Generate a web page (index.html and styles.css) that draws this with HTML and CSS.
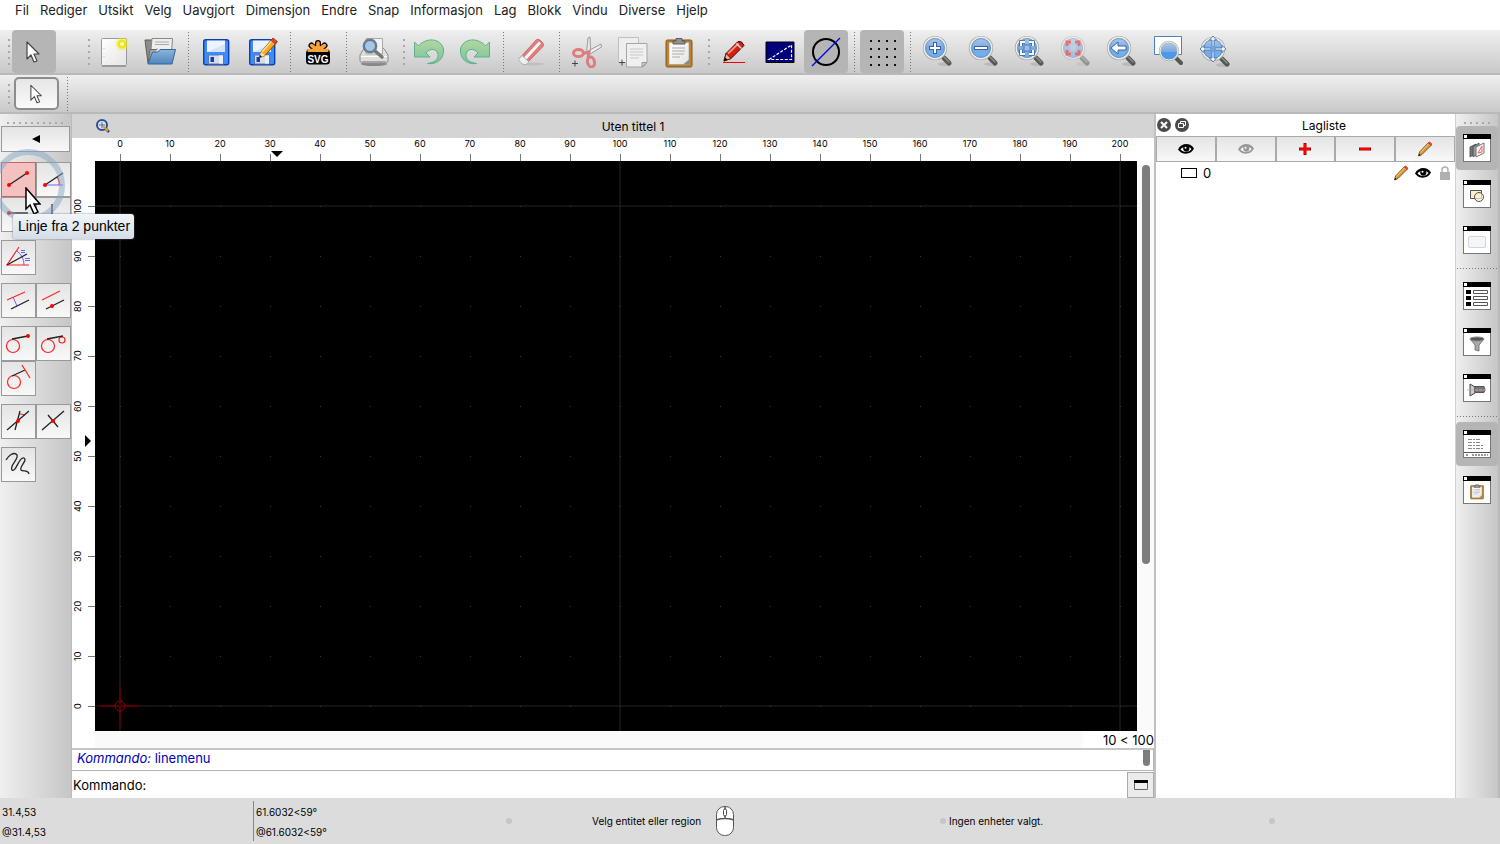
FILE: index.html
```html
<!DOCTYPE html>
<html lang="nb">
<head>
  <meta charset="UTF-8">
  <title>Uten tittel 1</title>
  <meta name="viewport" content="width=device-width, initial-scale=1.0">
  <link rel="stylesheet" href="styles.css">
</head>
<body>

  <!-- shared icon parts -->
  <svg class="defs" aria-hidden="true">
    <defs>
      <linearGradient id="glass" x1="0" y1="0" x2="0" y2="1">
        <stop offset="0" stop-color="#b4cbea"/><stop offset="0.5" stop-color="#7ba9e0"/><stop offset="1" stop-color="#6fb0f2"/>
      </linearGradient>
      <linearGradient id="green" x1="0" y1="0" x2="0" y2="1">
        <stop offset="0" stop-color="#b2d8a0"/><stop offset="1" stop-color="#78c29c"/>
      </linearGradient>
      <linearGradient id="paper" x1="0" y1="0" x2="1" y2="1">
        <stop offset="0" stop-color="#ffffff"/><stop offset="1" stop-color="#e4e4e2"/>
      </linearGradient>
      <linearGradient id="folder" x1="0" y1="0" x2="0" y2="1">
        <stop offset="0" stop-color="#8db4dc"/><stop offset="1" stop-color="#4f86bd"/>
      </linearGradient>
    </defs>
    <symbol id="i-pointer" viewBox="0 0 32 32">
      <path d="M9 6v17l4-4 3 7 3-1-3-7h5z" fill="#fff" stroke="#444" stroke-width="1.2" stroke-linejoin="round"/>
    </symbol>
    <symbol id="i-lens" viewBox="0 0 32 32">
      <ellipse cx="23" cy="28" rx="7" ry="2" fill="#000" opacity=".1"/>
      <path d="M20 20l2 2" stroke="#aaa" stroke-width="3"/>
      <path d="M22 22l5 5" stroke="#555753" stroke-width="5" stroke-linecap="round"/>
      <path d="M22 21l5 5" stroke="#8b8d88" stroke-width="1.5" stroke-linecap="round"/>
      <circle cx="13" cy="12" r="11" fill="url(#glass)" stroke="#a8aaa3" stroke-width="2.4"/>
      <circle cx="13" cy="12" r="10.7" fill="none" stroke="#eeeeec" stroke-width="1.4"/>
      <circle cx="13" cy="12" r="9.4" fill="none" stroke="#5c8cc8" stroke-width=".8"/>
    </symbol>
    <symbol id="i-floppy" viewBox="0 0 32 32">
      <rect x="3.7" y="3.7" width="25" height="25" rx="2" fill="#3d8bfa" stroke="#103fa8" stroke-width="1.4"/>
      <path d="M7 4.500h18v11.500h-18z" fill="#edf4ff"/>
      <path d="M7 16l18-8v8z" fill="#d2e3fa"/>
      <rect x="8.500" y="19" width="15" height="9" fill="#d8dce4" stroke="#5379b8"/>
      <rect x="10.500" y="21" width="3.500" height="5" fill="#0b3eb8"/>
      <path d="M20 19v9M22 19v9" stroke="#fff"/>
    </symbol>
    <symbol id="i-pencil" viewBox="0 0 16 16">
      <path d="M1.500 15l1-4L11.500 1.500l3 2.500L5 13.500z" fill="#d99838" stroke="#70451c" stroke-width=".8"/>
      <path d="M3.500 11.500l8.500-9" stroke="#f5ce8a"/>
      <path d="M11 2l1.500-1.500 2.800 2.600L14 4.700z" fill="#e33a22"/>
      <path d="M1.500 15l.6-2.200 1.500 1.500z" fill="#111"/>
    </symbol>
    <symbol id="i-eye" viewBox="0 0 16 12">
      <path d="M0 6.500C3 0 12-1 16 5.500 13 12 4 12.500 0 6.500z" fill="currentColor"/>
      <path d="M2.500 6.500C5 3 11 3 13.500 6 11 9.500 5.500 10 2.500 6.500z" fill="#fff"/>
      <circle cx="8.300" cy="5.600" r="3.100" fill="currentColor"/>
      <circle cx="7.500" cy="4.700" r="1" fill="#fff"/>
    </symbol>
    <symbol id="i-window" viewBox="0 0 28 28">
      <rect x=".5" y=".5" width="27" height="27" fill="#fff" stroke="#777"/>
      <path d="M0 0h28v5h-28z" fill="#000"/>
      <path d="M1 1h3v3h-3z" fill="#fff"/>
    </symbol>
    <symbol id="i-clipboard" viewBox="0 0 32 32">
      <rect x="3" y="4" width="26" height="27" rx="1.500" fill="#bc812b" stroke="#83571a"/>
      <path d="M6 6.500h20v22h-20z" fill="url(#paper)" stroke="#999" stroke-width=".6"/>
      <path d="M26 23.500v5h-6z" fill="#8a8a86"/>
      <path d="M9 12h13M9 15h13M9 18h12M9 21h8" stroke="#aaa"/>
      <path d="M10 8v-3h3v-2.500h6v2.500h3v3z" fill="#92948f" stroke="#50524e" stroke-width=".9"/>
    </symbol>
  </svg>

  <nav class="menubar">
    <a href="#">Fil</a>
    <a href="#">Rediger</a>
    <a href="#">Utsikt</a>
    <a href="#">Velg</a>
    <a href="#">Uavgjort</a>
    <a href="#">Dimensjon</a>
    <a href="#">Endre</a>
    <a href="#">Snap</a>
    <a href="#">Informasjon</a>
    <a href="#">Lag</a>
    <a href="#">Blokk</a>
    <a href="#">Vindu</a>
    <a href="#">Diverse</a>
    <a href="#">Hjelp</a>
  </nav>

  <div class="toolbar">
    <span class="handle"></span>
    <button class="tool pressed" aria-label="Velg"><svg viewBox="0 0 32 32"><use href="#i-pointer"/></svg></button>
    <span class="handle spaced"></span>
    <button class="tool" aria-label="Ny">
      <svg viewBox="0 0 32 32">
        <rect x="3.500" y="2.500" width="25" height="27" rx="1" fill="url(#paper)" stroke="#999"/>
        <path d="M4 30.500h24" stroke="#777" opacity=".6"/>
        <path d="M6 12v1M6 20v1" stroke="#bbb"/>
        <circle cx="24" cy="8" r="6.500" fill="#f4ef31" opacity=".45"/>
        <circle cx="24" cy="8" r="4.500" fill="#efe51c"/>
        <circle cx="24" cy="8" r="2" fill="#fffcc0"/>
      </svg>
    </button>
    <button class="tool" aria-label="Åpne">
      <svg viewBox="0 0 32 32">
        <path d="M1 4h8l2 3v20h-7z" fill="#8b8d89" stroke="#5b5d59"/>
        <path d="M8 2.500h20.500l-1.500 22h-21z" fill="#eee" stroke="#888"/>
        <path d="M11 6h14M11 8.500h14" stroke="#aaa"/>
        <path d="M4 27.500l2-14h6l1.500-.5" stroke="#666" fill="#aaa"/>
        <path d="M4 28l4.500-12H14l2-2.500h15.500L28 28z" fill="url(#folder)" stroke="#34659b"/>
      </svg>
    </button>
    <span class="sep"></span>
    <button class="tool" aria-label="Lagre"><svg viewBox="0 0 32 32"><use href="#i-floppy"/></svg></button>
    <button class="tool" aria-label="Lagre som">
      <svg viewBox="0 0 32 32">
        <use href="#i-floppy"/>
        <path d="M13 22l2-6L26.500 2.500l4.500 3.500L19 19.500z" fill="#f8a91f" stroke="#8f4a05"/>
        <path d="M16 16L27 3.500" stroke="#ffe08a" stroke-width="1.500"/>
        <path d="M25 4.500l2-2.500 4.500 3.500-2 2.500z" fill="#dc4a35" stroke="#8d2a18" stroke-width=".7"/>
        <path d="M13 22l2-6 4 3.500z" fill="#f6dfb6"/>
        <path d="M13 22l1-3 2 1.500z" fill="#111"/>
      </svg>
    </button>
    <span class="sep"></span>
    <button class="tool" aria-label="Eksporter SVG">
      <svg viewBox="0 0 32 32">
        <g stroke="#000" stroke-width="6" stroke-linecap="round"><path d="M16 16V7M16 16L9.500 9.500M16 16l6.500-6.500M16 16H7.500M16 16h8.500"/></g>
        <rect x="4" y="14" width="24" height="14.500" rx="3.500" fill="#000"/>
        <g stroke="#f7a23a" stroke-width="3.500" stroke-linecap="round"><path d="M16 14V7M16 14l-6.500-4.500M16 14l6.500-4.500M16 14.500H7M16 14.500h9"/></g>
        <rect x="5" y="16" width="22" height="12" rx="2.500" fill="#000"/>
        <text x="16" y="27" class="svg-label">SVG</text>
      </svg>
    </button>
    <span class="sep"></span>
    <button class="tool" aria-label="Forhåndsvisning">
      <svg viewBox="0 0 32 32">
        <ellipse cx="16" cy="28" rx="13" ry="2" fill="#888"/>
        <path d="M5 14l3-3h16l3 3 3 5v6l-2 2.500H4L2 25v-6z" fill="#dededc" stroke="#8b8d88"/>
        <path d="M8 2.500h16.500V18H8z" fill="#f2f2f0" stroke="#aaa"/>
        <path d="M3 20.500h26" stroke="#fff"/>
        <path d="M4 26h24" stroke="#a5a5a3" stroke-width="2"/>
        <path d="M17 15l7 6" stroke="#777975" stroke-width="3.500" stroke-linecap="round"/>
        <circle cx="12" cy="10" r="6.500" fill="#a9c5e6" stroke="#7a7c78" stroke-width="1.800"/>
        <circle cx="12" cy="10" r="5.500" fill="none" stroke="#3f78bc"/>
      </svg>
    </button>
    <span class="handle"></span>
    <button class="tool" aria-label="Angre">
      <svg viewBox="0 0 32 32">
        <path id="bend" d="M1.500 6l4 4C13 1 28 2 30.500 13c1 9-6 16-16 14.500 7-1 11-4 10.500-9-1-6-8-7-12-1.500l4 4H1.500z" fill="url(#green)" stroke="#5eb08b" stroke-linejoin="round"/>
      </svg>
    </button>
    <button class="tool" aria-label="Gjør om">
      <svg viewBox="0 0 32 32"><use href="#bend" transform="matrix(-1 0 0 1 32 0)"/></svg>
    </button>
    <span class="sep"></span>
    <button class="tool faded" aria-label="Slett">
      <svg viewBox="0 0 32 32">
        <ellipse cx="18" cy="28" rx="11" ry="1.500" fill="#bbb"/>
        <path d="M4 23L21 4q2-1.500 4 0l3 3q1 2 0 3.500L11 28z" fill="#e86464" stroke="#b04444" stroke-width=".8"/>
        <path d="M8.500 22L24 5.500l2 2L10.500 24.500z" fill="#fff"/>
        <path d="M3.500 23.500L7 19.500l7 6.500-3 2.500q-4 1-7.500-5z" fill="#f7f7f7" stroke="#aaa"/>
      </svg>
    </button>
    <span class="sep"></span>
    <button class="tool" aria-label="Klipp ut">
      <svg viewBox="0 0 32 32">
        <path d="M15.500 17L17 2l2-1 .5 15z" fill="#eee" stroke="#999"/>
        <path d="M17 15l13-7 .5 3L19 18z" fill="#eee" stroke="#999"/>
        <g fill="none" stroke="#dd7d7d" stroke-width="3"><ellipse cx="7.500" cy="17" rx="5" ry="3.500"/><ellipse cx="20" cy="26" rx="3.500" ry="5" transform="rotate(-12 20 26)"/><path d="M12 17.500l6-1.500-1 6"/></g>
        <path d="M1 27.500h6M4 24.500v6" stroke="#444"/>
      </svg>
    </button>
    <button class="tool" aria-label="Kopier">
      <svg viewBox="0 0 32 32">
        <path d="M1.500 1.500h20v25h-20z" fill="#eee" stroke="#c0c0c0"/>
        <path d="M9.500 7.500h20.500v19l-4 4.500H9.500z" fill="#f0f0f0" stroke="#a5a5a5"/>
        <path d="M30 26.500h-5V31z" fill="#ccc" stroke="#999"/>
        <path d="M13 13h13M13 16h13M13 19h13M13 22h9" stroke="#c8c8c8"/>
        <path d="M2 26.500h6M5 23.500v6" stroke="#444"/>
      </svg>
    </button>
    <button class="tool" aria-label="Lim inn"><svg viewBox="0 0 32 32"><use href="#i-clipboard"/></svg></button>
    <span class="handle"></span>
    <button class="tool" aria-label="Penn">
      <svg viewBox="0 0 32 32">
        <path d="M6 25l2-7.500L20 5.500q4-1 6 4L13 22.500z" fill="#d71e13" stroke="#400"/>
        <path d="M10 17.500L20.500 7.500" stroke="#ff8b7d" stroke-width="2"/>
        <path d="M18.500 7.500l5 5" stroke="#ddd" stroke-width="1.500"/>
        <path d="M6 25l2-7.500 5 5z" fill="#e3b887" stroke="#400" stroke-width=".7"/>
        <path d="M6 25l1-3.500 2.500 2.300z"/>
        <path d="M5 26.500h22" stroke="#f00"/>
      </svg>
    </button>
    <button class="tool" aria-label="Utkast">
      <svg viewBox="0 0 32 32">
        <path d="M2 6h28v20.500H2z" fill="#00007d" stroke="#000"/>
        <path d="M5 23.500L27.500 9v14.500z" fill="none" stroke="#fff" stroke-width="1.200" stroke-dasharray="3 1.500"/>
      </svg>
    </button>
    <button class="tool pressed" aria-label="Utkastmodus">
      <svg viewBox="0 0 32 32">
        <circle cx="16" cy="16" r="13" fill="none" stroke="#000" stroke-width="2"/>
        <path d="M2 30L30 2" stroke="#00d" stroke-width="1.200"/>
      </svg>
    </button>
    <span class="sep"></span>
    <button class="tool pressed" aria-label="Rutenett">
      <svg viewBox="0 0 32 32"><path d="M4 5h26M4 13h26M4 21h26M4 29h26" stroke="#111" stroke-width="2" stroke-dasharray="2 6"/></svg>
    </button>
    <span class="sep"></span>
    <button class="tool" aria-label="Zoom inn">
      <svg viewBox="0 0 32 32"><use href="#i-lens"/><path d="M13 6v12M7 12h12" stroke="#3465a4" stroke-width="4"/><path d="M13 7v10M8 12h10" stroke="#fff" stroke-width="2"/></svg>
    </button>
    <button class="tool" aria-label="Zoom ut">
      <svg viewBox="0 0 32 32"><use href="#i-lens"/><path d="M6 12h14" stroke="#3465a4" stroke-width="4"/><path d="M7 12h12" stroke="#fff" stroke-width="2"/></svg>
    </button>
    <button class="tool" aria-label="Autozoom">
      <svg viewBox="0 0 32 32">
        <use href="#i-lens"/>
        <path d="M7 10V6h4M15 6h4v4M19 14v4h-4M11 18H7v-4" fill="none" stroke="#3465a4" stroke-width="3.600"/>
        <path d="M7 10V6h4M15 6h4v4M19 14v4h-4M11 18H7v-4" fill="none" stroke="#fff" stroke-width="2"/>
        <rect x="10" y="9" width="6" height="6" fill="#9dbde5" stroke="#4b7fc0"/>
      </svg>
    </button>
    <button class="tool disabled" aria-label="Zoom til utvalg">
      <svg viewBox="0 0 32 32">
        <use href="#i-lens"/>
        <path d="M7 10V6h4M15 6h4v4M19 14v4h-4M11 18H7v-4" fill="none" stroke="#f00000" stroke-width="3"/>
        <rect x="10" y="9" width="6" height="6" fill="#9dbde5"/>
      </svg>
    </button>
    <button class="tool" aria-label="Forrige visning">
      <svg viewBox="0 0 32 32"><use href="#i-lens"/><path d="M5 12l7-6v4h8v4h-8v4z" fill="#fff" stroke="#3465a4" stroke-linejoin="round"/></svg>
    </button>
    <button class="tool" aria-label="Zoom vindu">
      <svg viewBox="0 0 32 32">
        <path d="M2.500.5h27v18h-27z" fill="#fff" stroke="#4c80c4"/>
        <path d="M24 22l5 5" stroke="#555753" stroke-width="4" stroke-linecap="round"/>
        <circle cx="17" cy="15" r="9" fill="url(#glass)" stroke="#b5b7b0" stroke-width="2.500"/>
        <path d="M9 16h16a8 8 0 0 1-16 0z" fill="#4e98e8"/>
        <circle cx="17" cy="15" r="9" fill="none" stroke="#eee"/>
      </svg>
    </button>
    <button class="tool" aria-label="Panorer">
      <svg viewBox="0 0 32 32">
        <use href="#i-lens" x="2" y="1" width="32" height="32"/>
        <g fill="#fff" stroke="#3f73b6" stroke-width=".9" stroke-linejoin="round">
          <path d="M15 0l3.500 4H16v7h-2V4h-2.500z"/><path d="M15 26l3.500-4H16v-7h-2v7h-2.500z"/>
          <path d="M2 13l4-3.500V12h7v2H6v2.500z"/><path d="M28 13l-4-3.500V12h-7v2h7v2.500z"/>
        </g>
        <circle cx="15" cy="13" r="2" fill="#6fa4df"/>
      </svg>
    </button>
  </div>

  <div class="toolbar options">
    <span class="handle"></span>
    <button class="option" aria-label="Pekerverktøy"><svg viewBox="0 0 32 32"><use href="#i-pointer"/></svg></button>
    <span class="sep"></span>
  </div>

  <main class="workspace">

    <aside class="tools">
      <span class="grip"></span>
      <button class="back" aria-label="Tilbake"><svg viewBox="0 0 8 8"><path d="M0 4l8-4v8z"/></svg></button>

      <div class="tool-group first">
        <button class="cell active" aria-label="Linje fra 2 punkter"><svg viewBox="0 0 35 35"><path class="k" d="M8 23l18-12"/><circle class="dot" cx="8" cy="23" r="2"/><circle class="dot" cx="26" cy="11" r="2"/></svg></button>
        <button class="cell" aria-label="Linje med vinkel"><svg viewBox="0 0 35 35"><path class="b" d="M9 23h18"/><path class="r" d="M21 15q3 4 2 8"/><path class="k" d="M9 23l18-12"/><circle class="dot" cx="9" cy="23" r="2"/></svg></button>
        <button class="cell" aria-label="Horisontal linje"><svg viewBox="0 0 35 35"><path class="k" d="M8 16h19"/><circle class="dot" cx="8" cy="16" r="2"/></svg></button>
        <button class="cell" aria-label="Vertikal linje"><svg viewBox="0 0 35 35"><path class="k" d="M16 7v19"/><circle class="dot" cx="16" cy="26" r="2"/></svg></button>
      </div>
      <div class="tool-group">
        <button class="cell" aria-label="Halveringslinje"><svg viewBox="0 0 35 35"><path class="b" d="M16 11q7 5 7 14M20 10.500h4M20 12.500h4M24 18.500h5M24 20.500h5"/><path class="r" d="M18 7L6 25h22"/><path class="k" d="M6 25l20-11"/></svg></button>
      </div>
      <div class="tool-group">
        <button class="cell" aria-label="Parallell med avstand"><svg viewBox="0 0 35 35"><path class="r" d="M6 17l18-8"/><path class="b" d="M12 14l4 9"/><path class="k" d="M10 26l18-9"/></svg></button>
        <button class="cell" aria-label="Parallell gjennom punkt"><svg viewBox="0 0 35 35"><path class="r" d="M6 17l18-9"/><path class="k" d="M10 26l18-9"/><circle class="dot" cx="16" cy="23" r="2"/></svg></button>
      </div>
      <div class="tool-group">
        <button class="cell" aria-label="Tangent fra punkt"><svg viewBox="0 0 35 35"><circle class="r" cx="12" cy="20" r="6.500"/><path class="k" d="M11 13l16-3"/><circle class="dot" cx="27" cy="10" r="2"/></svg></button>
        <button class="cell" aria-label="Tangent fra 2 sirkler"><svg viewBox="0 0 35 35"><circle class="r" cx="12" cy="20" r="6.500"/><circle class="r" cx="26" cy="14" r="3"/><path class="k" d="M11 13l16-3"/></svg></button>
        <button class="cell" aria-label="Ortogonal tangent"><svg viewBox="0 0 35 35"><circle class="r" cx="13" cy="21" r="6.500"/><path class="k" d="M11 15l13-6"/><path class="r" d="M21 4l8 13"/></svg></button>
      </div>
      <div class="tool-group">
        <button class="cell" aria-label="Relativ vinkel"><svg viewBox="0 0 35 35"><path class="r" d="M19 10l5 1"/><path class="k" d="M6 26L28 7M14 26l5-19"/><circle class="dot" cx="17" cy="17" r="2"/></svg></button>
        <button class="cell" aria-label="Ortogonal linje"><svg viewBox="0 0 35 35"><path class="k" d="M6 26L28 7M12 11l10 12"/><circle class="dot" cx="17" cy="17" r="2"/></svg></button>
      </div>
      <div class="tool-group">
        <button class="cell" aria-label="Frihåndslinje"><svg viewBox="0 0 35 35"><path class="k" d="M5 13c2-4 8-9 11-5 2 4-8 11-5 15 4 3 7-14 12-12 4 2-5 9-3 12 2 2 7-1 8 4"/></svg></button>
      </div>

      <div class="click-ring"></div>
      <svg class="mouse-arrow" viewBox="0 0 16 28"><path d="M1 1v21l4-4 4 9 4-2-4-8h6z" fill="#fff" stroke="#000" stroke-width="1.500"/></svg>
      <div class="tooltip" role="tooltip">Linje fra 2 punkter</div>
    </aside>

    <section class="document">
      <header class="doc-title">
        <svg class="doc-icon" viewBox="0 0 14 14"><circle cx="6" cy="6" r="5" fill="#dce6f5" stroke="#2c4d91" stroke-width="2"/><path d="M3 6h6M6 3v6" stroke="#456cac"/><path d="M9 9l4 4" stroke="#24427c" stroke-width="2.500"/><path d="M7 7l5 5" stroke="#e3a021" stroke-width="2"/></svg>
        <h1>Uten tittel 1</h1>
      </header>

      <div class="view">
        <div class="ruler-top">
          <span>0</span><span>10</span><span>20</span><span>30</span><span>40</span><span>50</span><span>60</span><span>70</span><span>80</span><span>90</span><span>100</span><span>110</span><span>120</span><span>130</span><span>140</span><span>150</span><span>160</span><span>170</span><span>180</span><span>190</span><span>200</span>
          <i class="marker-x"></i>
        </div>
        <div class="ruler-left">
          <span>0</span><span>10</span><span>20</span><span>30</span><span>40</span><span>50</span><span>60</span><span>70</span><span>80</span><span>90</span><span>100</span>
          <i class="marker-y"></i>
        </div>
        <svg class="drawing" viewBox="0 0 1042 570" preserveAspectRatio="xMinYMax slice" aria-label="Tegning">
          <defs>
            <pattern id="dots" x="0" y="20" width="50" height="50" patternUnits="userSpaceOnUse">
              <rect x="25" y="25" width="1" height="1" fill="#3a3a3a"/>
            </pattern>
          </defs>
          <rect width="1042" height="570" fill="#000"/>
          <path d="M25 0v570M525 0v570M1025 0v570M0 45h1042M0 545h1042" stroke="#121212" stroke-width="2"/>
          <rect width="1042" height="570" fill="url(#dots)"/>
          <path d="M25 525v40M5 545h40" stroke="#500000" stroke-width="2"/>
          <circle cx="25" cy="545" r="5" fill="none" stroke="#900000"/>
        </svg>
        <div class="scroll-y"><span></span></div>
      </div>
      <div class="view-foot">
        <span class="scroll-x"></span>
        <span class="grid-status">10 &lt; 100</span>
      </div>

      <div class="log">
        <p><em>Kommando:</em> linemenu</p>
        <span class="log-thumb"></span>
      </div>
      <form class="command">
        <label for="command">Kommando:</label>
        <input id="command" type="text">
        <button type="button" aria-label="Flytt kommandovindu"><svg viewBox="0 0 14 10"><path d="M.5.5h13v9H.5z" fill="#eee" stroke="#666"/><path d="M0 0h14v3H0z"/></svg></button>
      </form>
    </section>

    <section class="layers">
      <header class="layers-title">
        <button aria-label="Lukk"><svg viewBox="0 0 14 14"><circle cx="7" cy="7" r="7" fill="#4b4b4b"/><path d="M4 4l6 6M10 4l-6 6" stroke="#fff" stroke-width="2"/></svg></button>
        <button aria-label="Løsne"><svg viewBox="0 0 14 14"><circle cx="7" cy="7" r="7" fill="#4b4b4b"/><path d="M5.500 5.500v-2h5v4h-2M3.500 5.500h5v4h-5z" fill="none" stroke="#fff"/></svg></button>
        <h2>Lagliste</h2>
      </header>
      <div class="layer-actions">
        <button aria-label="Vis alle"><svg class="eye" viewBox="0 0 16 12"><use href="#i-eye"/></svg></button>
        <button aria-label="Skjul alle"><svg class="eye dim" viewBox="0 0 16 12"><use href="#i-eye"/></svg></button>
        <button aria-label="Legg til lag"><svg class="sign" viewBox="0 0 12 12"><path d="M6 0v12M0 6h12" stroke="#a00" stroke-width="3"/><path d="M6 1v10M1 6h10" stroke="#f00" stroke-width="2"/></svg></button>
        <button aria-label="Fjern lag"><svg class="sign" viewBox="0 0 12 12"><path d="M0 6h12" stroke="#a00" stroke-width="3"/><path d="M1 6h10" stroke="#f00" stroke-width="2"/></svg></button>
        <button aria-label="Rediger lag"><svg class="pencil" viewBox="0 0 16 16"><use href="#i-pencil"/></svg></button>
      </div>
      <div class="layer">
        <span class="swatch"></span>
        <span class="layer-name">0</span>
        <svg class="pencil" viewBox="0 0 16 16"><use href="#i-pencil"/></svg>
        <svg class="eye" viewBox="0 0 16 12"><use href="#i-eye"/></svg>
        <svg class="lock" viewBox="0 0 10 14"><path d="M2 7V4q0-3 3-3t3 3v3" fill="none" stroke="#b0b0b0" stroke-width="1.500"/><path d="M0 6h10v8H0z" fill="#b0b0b0"/></svg>
      </div>
    </section>

    <aside class="docks">
      <span class="grip"></span>
      <button class="tool pressed" aria-label="Lagliste">
        <svg viewBox="0 0 28 28"><use href="#i-window"/><path d="M7 13l6-3v9l-6 4z" fill="#777" stroke="#444" stroke-width=".8"/><path d="M10 13l6-4v10l-6 4z" fill="#999" stroke="#444" stroke-width=".8"/><path d="M13 13l8-4v10l-8 4z" fill="#f4f4f4" stroke="#777"/><path d="M15 19l4-7v6l-4 1" fill="none" stroke="#e66"/></svg>
      </button>
      <button class="tool" aria-label="Blokkliste">
        <svg viewBox="0 0 28 28"><use href="#i-window"/><path d="M7.500 10.500h11v8h-11z" fill="#fcf1cc" stroke="#555"/><circle cx="16" cy="17" r="4.500" fill="#fcf1cc" fill-opacity=".7" stroke="#555"/></svg>
      </button>
      <button class="tool" aria-label="Bibliotek">
        <svg viewBox="0 0 28 28"><use href="#i-window"/><rect x="5.500" y="10.500" width="17" height="11" rx="1.500" fill="#f6f6f6" stroke="#cbd7e6"/></svg>
      </button>
      <span class="dock-sep"></span>
      <button class="tool" aria-label="Egenskaper">
        <svg viewBox="0 0 28 28"><use href="#i-window"/><path d="M3 8h5v4H3zM3 14h5v4H3zM3 20h5v4H3z"/><path d="M10.500 8.500h14v3h-14zM10.500 14.500h14v3h-14zM10.500 20.500h14v3h-14z" fill="#fff" stroke="#555"/></svg>
      </button>
      <button class="tool" aria-label="Utvalgsfilter">
        <svg viewBox="0 0 28 28"><use href="#i-window"/><path d="M7 11l5 6v5l4 1v-6l5-6z" fill="#aaa" stroke="#666" stroke-width=".8"/><ellipse cx="14" cy="11" rx="7" ry="2" fill="#555" stroke="#888"/></svg>
      </button>
      <button class="tool" aria-label="Visninger">
        <svg viewBox="0 0 28 28"><use href="#i-window"/><path d="M7 10l5 3v6l-5 3z" fill="#ccc" stroke="#444"/><path d="M12 12.500h9q2 3 0 6h-9z" fill="#777" stroke="#555"/><path d="M4 16h20" stroke="#f3a0a0" stroke-dasharray="3 1"/></svg>
      </button>
      <span class="dock-sep"></span>
      <button class="tool pressed" aria-label="Kommandolinje">
        <svg viewBox="0 0 28 28"><use href="#i-window"/><path d="M5 9.500h13M5 12.500h12M5 15.500h15M5 18.500h15" stroke="#888" stroke-dasharray="4 1 2 1"/><path d="M1 22.500h26" stroke="#555"/><path d="M3 25h2M9 25h16" stroke="#333" stroke-dasharray="2 1"/></svg>
      </button>
      <button class="tool" aria-label="Utklippstavle">
        <svg viewBox="0 0 28 28"><use href="#i-window"/><use href="#i-clipboard" x="6" y="7" width="16" height="17"/></svg>
      </button>
    </aside>
  </main>

  <footer class="status">
    <div class="coords"><span>31.4,53</span><span>@31.4,53</span></div>
    <div class="coords polar"><span>61.6032&lt;59°</span><span>@61.6032&lt;59°</span></div>
    <div class="hint">
      <i class="bullet"></i>
      <span>Velg entitet eller region</span>
      <svg class="mouse" viewBox="0 0 18 30"><rect x=".5" y=".5" width="17" height="29" rx="8" fill="#fff" stroke="#555"/><path d="M0 14q9-3 18 0M9 0v3M9 10v3" fill="none" stroke="#555" stroke-width="1.500"/><rect x="7.500" y="3" width="3" height="7" rx="1.500" fill="#fff" stroke="#444"/></svg>
    </div>
    <div class="selection"><i class="bullet"></i><span>Ingen enheter valgt.</span></div>
    <div class="selection"><i class="bullet"></i></div>
  </footer>

</body>
</html>
```
FILE: styles.css
```css
* {
  box-sizing: border-box;
}

body {
  margin: 0;
  height: 100vh;
  display: flex;
  flex-direction: column;
  font-family: Inter, "Liberation Sans", sans-serif;
  font-size: 13px;
  color: #000;
  background: #fff;
}

h1, h2, p {
  margin: 0;
  font-weight: normal;
}

button {
  display: flex;
  align-items: center;
  justify-content: center;
  padding: 0;
  border: none;
  background: none;
}

svg {
  display: block;
}

.defs {
  position: absolute;
  width: 0;
  height: 0;
}

/* menu */
.menubar {
  flex: none;
  display: flex;
  gap: 11px;
  height: 30px;
  padding: 2px 15px;
  line-height: 17px;
}

.menubar a {
  color: #222;
  text-decoration: none;
}

/* toolbars */
.toolbar {
  flex: none;
  display: flex;
  align-items: center;
  gap: 2px;
  height: 45px;
  padding-left: 3px;
  background: linear-gradient(#efefef, #c9c9c9);
  border-bottom: 2px solid #b9b9b9;
}

.toolbar.options {
  height: 39px;
}

.handle {
  width: 7px;
  height: 26px;
  background: repeating-linear-gradient(#a9a9a9 0 2px, transparent 2px 6px) right / 2px 100% no-repeat;
}

.options .handle {
  height: 20px;
}

.handle.spaced {
  margin-left: 25px;
}

.sep {
  width: 8px;
  height: 40px;
  background: repeating-linear-gradient(#777 0 1px, transparent 1px 3px) center / 1px 100% no-repeat;
}

.options .sep {
  height: 34px;
  margin-left: 2px;
}

.tool {
  flex: none;
  width: 44px;
  height: 43px;
  border-radius: 4px;
}

.tool svg {
  width: 32px;
  height: 32px;
}

.tool.pressed {
  background: #b5b5b5;
}

.tool.disabled {
  opacity: 0.5;
}

.tool.faded {
  opacity: 0.8;
}

.svg-label {
  font: bold 10px "Liberation Sans", sans-serif;
  fill: #fff;
  text-anchor: middle;
}

.option {
  width: 45px;
  height: 33px;
  margin-left: 2px;
  border: 2px solid #8d8d8d;
  border-radius: 5px;
  background: linear-gradient(#e6e6e6, #fafafa);
}

.option svg {
  width: 28px;
  height: 28px;
}

/* workspace */
.workspace {
  flex: 1;
  min-height: 0;
  display: flex;
}

.grip {
  display: block;
  width: 58px;
  height: 2px;
  background: repeating-linear-gradient(90deg, #a9a9a9 0 2px, transparent 2px 6px);
}

.tools {
  position: relative;
  flex: none;
  width: 72px;
  padding: 8px 1px;
  background: linear-gradient(90deg, #efefef, #c6c6c6);
  border-right: 1px solid #bbb;
}

.tools .grip {
  margin: 0 auto 2px;
}

.back,
.cell {
  border: 1px solid #999;
  background: linear-gradient(#e4e4e4, #f8f8f8);
}

.back {
  width: 100%;
  height: 26px;
}

.back svg {
  width: 8px;
  height: 8px;
}

.tool-group {
  display: grid;
  grid-template-columns: 35px 35px;
  grid-auto-rows: 35px;
  margin-top: 8px;
}

.tool-group.first {
  margin-top: 10px;
}

.cell svg {
  width: 35px;
  height: 35px;
  flex: none;
  fill: none;
}

.cell.active {
  border-color: #d26060;
  background: #f4c1c1;
}

.cell .k { stroke: #222; stroke-width: 1.3; }
.cell .r { stroke: #f22; stroke-width: 1.2; }
.cell .b { stroke: #66f; }
.cell .dot { fill: #f00; }

/* pointer and its tooltip float above the tools */
.click-ring {
  position: absolute;
  z-index: 1;
  left: -8px;
  top: 35px;
  width: 73px;
  height: 73px;
  border: 6px solid rgba(132, 165, 194, 0.5);
  border-radius: 50%;
  clip-path: inset(0 0 0 8px);
}

.mouse-arrow {
  position: absolute;
  z-index: 2;
  left: 25px;
  top: 73px;
  width: 16px;
  height: 28px;
}

.tooltip {
  position: absolute;
  z-index: 3;
  left: 13px;
  top: 100px;
  padding: 0 4px 0 5px;
  font: 14px/25px "Liberation Sans", Arial, sans-serif;
  white-space: nowrap;
  border-radius: 3px;
  background: linear-gradient(#f1f5f9, #d4dde7);
  box-shadow: 0 0 2px #667;
}

/* document */
.document {
  flex: 1;
  min-width: 0;
  display: flex;
  flex-direction: column;
}

.doc-title {
  flex: none;
  display: flex;
  align-items: center;
  height: 24px;
  background: #d4d4d4;
}

.doc-icon {
  width: 14px;
  height: 14px;
  margin: 0 2px 0 24px;
}

.doc-title h1 {
  flex: 1;
  font-size: 12px;
  text-align: center;
}

.view {
  flex: 1;
  display: grid;
  grid-template-columns: 23px minmax(0, 1fr) 17px;
  grid-template-rows: 23px minmax(0, 1fr);
  min-height: 0;
}

.ruler-top,
.ruler-left {
  position: relative;
  display: flex;
  overflow: hidden;
  font-size: 9px;
}

.ruler-top {
  grid-column: 2 / 4;
}

.ruler-top span {
  flex: none;
  width: 50px;
  line-height: 12px;
  text-align: center;
  background: linear-gradient(#777, #777) 25px 100% / 1px 7px no-repeat;
}

.ruler-left {
  flex-direction: column-reverse;
}

.ruler-left span {
  flex: none;
  height: 50px;
  line-height: 12px;
  text-align: center;
  writing-mode: vertical-rl;
  transform: rotate(180deg);
  background: linear-gradient(#777, #777) 0 24px / 7px 1px no-repeat;
}

.marker-x,
.marker-y {
  position: absolute;
  border: 6px solid transparent;
}

.marker-x {
  left: 176px;
  top: 13px;
  border-top-color: #000;
  border-bottom: none;
}

.marker-y {
  left: 13px;
  bottom: 284px;
  border-left-color: #000;
  border-right: none;
}

.drawing {
  width: 100%;
  height: 100%;
  background: #000;
}

.scroll-y {
  padding: 4px 5px;
  background: #fafafa;
}

.scroll-y span {
  display: block;
  width: 8px;
  height: 71%;
  border-radius: 4px;
  background: #7d7d7d;
}

.view-foot {
  flex: none;
  display: flex;
  height: 17px;
  line-height: 18px;
}

.scroll-x {
  flex: 1;
  margin-left: 23px;
  background: #fafafa;
}

.grid-status {
  width: 71px;
  text-align: right;
}

.log {
  flex: none;
  display: flex;
  justify-content: space-between;
  height: 23px;
  padding: 0 3px 0 5px;
  border-top: 2px solid #c6c6c6;
  border-bottom: 1px solid #b5b5b5;
  border-right: 1px solid #b5b5b5;
  line-height: 17px;
  color: #0000b8;
}

.log-thumb {
  width: 7px;
  height: 16px;
  border-radius: 0 0 4px 4px;
  background: #7d7d7d;
}

.command {
  flex: none;
  display: flex;
  align-items: center;
  height: 27px;
  padding-left: 1px;
}

.command input {
  flex: 1;
  min-width: 0;
  border: none;
  outline: none;
  font: inherit;
}

.command button {
  width: 27px;
  height: 26px;
  border: 1px solid #aaa;
  background: #ebebeb;
}

.command svg {
  width: 14px;
  height: 10px;
}

/* layer list */
.layers {
  flex: none;
  width: 301px;
  border-left: 2px solid #c0c0c0;
}

.layers-title {
  display: flex;
  align-items: center;
  gap: 4px;
  height: 22px;
  padding-left: 1px;
}

.layers-title svg {
  width: 14px;
  height: 14px;
}

.layers-title h2 {
  flex: 1;
  font-size: 12px;
  text-align: center;
}

.layer-actions {
  display: grid;
  grid-template-columns: repeat(5, 1fr);
}

.layer-actions button {
  height: 26px;
  border: 1px solid #aaa;
  background: linear-gradient(#e4e4e4, #f8f8f8);
}

.eye {
  width: 16px;
  height: 12px;
}

.eye.dim {
  color: #999;
}

.sign {
  width: 12px;
  height: 12px;
}

.pencil {
  width: 16px;
  height: 16px;
}

.layer {
  display: flex;
  align-items: center;
  gap: 6px;
  height: 22px;
  padding: 0 5px 0 25px;
}

.swatch {
  width: 16px;
  height: 10px;
  border: 1px solid #000;
}

.layer-name {
  flex: 1;
}

.lock {
  width: 10px;
  height: 14px;
  margin-left: 3px;
}

/* dock buttons */
.docks {
  flex: none;
  display: flex;
  flex-direction: column;
  align-items: center;
  gap: 2px;
  width: 45px;
  padding-top: 8px;
  background: linear-gradient(90deg, #efefef, #c6c6c6);
  border-left: 1px solid #d0d0d0;
  border-right: 2px solid #b9b9b9;
}

.docks .grip {
  width: 26px;
}

.docks .tool {
  width: 42px;
  height: 44px;
}

.docks .tool svg {
  width: 28px;
  height: 28px;
}

.dock-sep {
  width: 40px;
  height: 8px;
  background: repeating-linear-gradient(90deg, #777 0 1px, transparent 1px 3px) center / 100% 1px no-repeat;
}

/* status bar */
.status {
  flex: none;
  display: grid;
  grid-template-columns: 253fr 253fr 434fr 329fr 231fr;
  align-items: center;
  height: 46px;
  background: #dcdcdc;
  font-size: 10px;
}

.coords {
  display: flex;
  flex-direction: column;
  gap: 8px;
  padding: 5px 2px 3px;
  line-height: 12px;
}

.polar {
  border-left: 1px solid #888;
}

.hint,
.selection {
  display: flex;
  align-items: center;
  gap: 3px;
}

.hint span {
  margin: 0 12px 0 77px;
}

.mouse {
  width: 18px;
  height: 30px;
}

.bullet {
  width: 6px;
  height: 6px;
  border-radius: 50%;
  background: #c6c6c6;
}
```
